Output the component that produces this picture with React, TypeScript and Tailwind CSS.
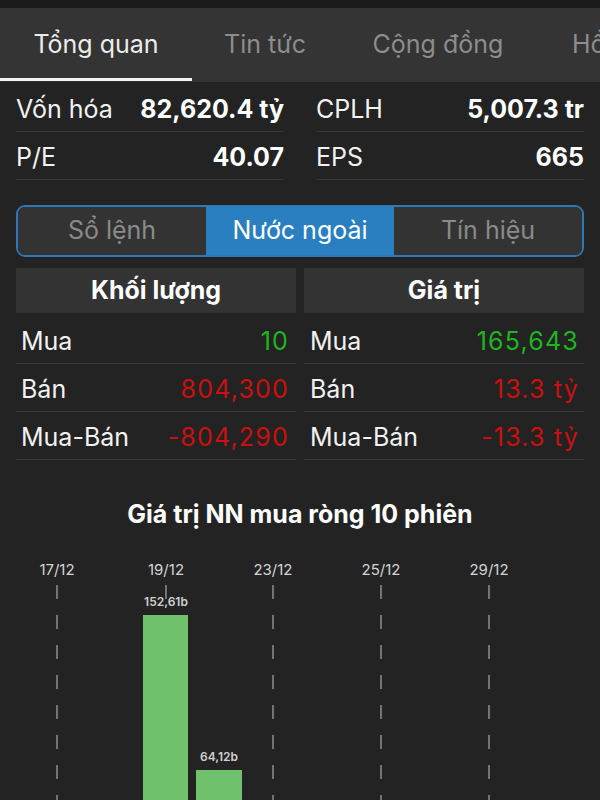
import React from 'react';

const tabs = [
  { label: 'Tổng quan', w: 'w-[192px]', active: true },
  { label: 'Tin tức', w: 'w-[146px]', active: false },
  { label: 'Cộng đồng', w: 'w-[200px]', active: false },
];

const infoRows = [
  [
    { label: 'Vốn hóa', value: '82,620.4 tỷ' },
    { label: 'CPLH', value: '5,007.3 tr' },
  ],
  [
    { label: 'P/E', value: '40.07' },
    { label: 'EPS', value: '665' },
  ],
];

const volumeRows = [
  { label: 'Mua', value: '10', up: true },
  { label: 'Bán', value: '804,300', up: false },
  { label: 'Mua-Bán', value: '-804,290', up: false },
];

const valueRows = [
  { label: 'Mua', value: '165,643', up: true },
  { label: 'Bán', value: '13.3 tỷ', up: false },
  { label: 'Mua-Bán', value: '-13.3 tỷ', up: false },
];

const dates = [
  { x: 57, label: '17/12' },
  { x: 166, label: '19/12' },
  { x: 273, label: '23/12' },
  { x: 381, label: '25/12' },
  { x: 489, label: '29/12' },
];

const TradeColumn: React.FC<{ title: string; rows: typeof volumeRows; pad: string }> = ({ title, rows, pad }) => (
  <div className="flex flex-col">
    <div className="h-[45px] bg-[#333333] flex items-center justify-center text-[25px] font-bold text-white">
      {title}
    </div>
    <div className="mt-[3px]">
      {rows.map((r) => (
        <div key={r.label} className={`h-12 pt-1 flex items-center justify-between border-b border-[#383838] ${pad}`}>
          <span className="text-[25px] text-[#f2f2f2]">{r.label}</span>
          <span className={`text-[25px] tracking-[1.2px] -mr-[1px] ${r.up ? 'text-[#1fb51f]' : 'text-[#cc1010]'}`}>{r.value}</span>
        </div>
      ))}
    </div>
  </div>
);

// 10-session net buy chart, drawn in page coordinates (top edge = y 530)
const NetBuyChart: React.FC = () => (
  <svg width="600" height="270" viewBox="0 530 600 270" className="block">
    {dates.map((d) => (
      <g key={d.label}>
        <text x={d.x} y={575} textAnchor="middle" fontSize="15" fill="#d4d4d4" fontFamily="Inter, sans-serif">
          {d.label}
        </text>
        <line x1={d.x} y1={585} x2={d.x} y2={800} stroke="#8f8f8f" strokeWidth="1.5" strokeDasharray="14 16" />
      </g>
    ))}
    <rect x={143} y={615} width={45} height={190} fill="#6fc16c" />
    <rect x={196} y={770} width={46} height={40} fill="#6fc16c" />
    <text x={166} y={606} textAnchor="middle" fontSize="12" fontWeight="600" fill="#cfcfcf" fontFamily="Inter, sans-serif">
      152,61b
    </text>
    <text x={219} y={761} textAnchor="middle" fontSize="12" fontWeight="600" fill="#cfcfcf" fontFamily="Inter, sans-serif">
      64,12b
    </text>
  </svg>
);

export default function App() {
  return (
    <div className="w-[600px] h-[800px] overflow-hidden bg-[#232323] font-['Inter',sans-serif]">
      <div className="h-2 bg-[#1b1b1b]" />

      {/* Top tabs */}
      <div className="h-[74px] bg-[#343434] flex whitespace-nowrap overflow-hidden">
        {tabs.map((t) => (
          <div key={t.label} className={`${t.w} shrink-0 flex flex-col`}>
            <div className={`flex-1 pt-1 flex items-center justify-center text-[25px] ${t.active ? 'text-[#ececec]' : 'text-[#8d8d8d]'}`}>
              {t.label}
            </div>
            <div className={`h-[3px] mb-[1px] ${t.active ? 'bg-[#f2f2f2]' : ''}`} />
          </div>
        ))}
        <div className="shrink-0 flex items-center pl-[34px] text-[25px] text-[#8d8d8d]">Hồ sơ</div>
      </div>

      {/* Summary */}
      <div className="px-4 grid grid-cols-2 gap-x-8 pt-[2px]">
        {infoRows.flat().map((c) => (
          <div key={c.label} className="h-12 pt-1 flex items-center justify-between border-b border-[#383838]">
            <span className="text-[25px] text-[#f2f2f2]">{c.label}</span>
            <span className="text-[25px] font-bold text-white">{c.value}</span>
          </div>
        ))}
      </div>

      {/* Segmented control */}
      <div className="mx-4 mt-[25px] h-[52px] rounded-[9px] border-2 border-[#2d78b6] overflow-hidden grid grid-cols-3">
        <div className="bg-[#333333] flex items-center justify-center text-[25px] text-[#8a8a8a]">Sổ lệnh</div>
        <div className="bg-[#2a7fc1] flex items-center justify-center text-[25px] text-white">Nước ngoài</div>
        <div className="bg-[#333333] flex items-center justify-center text-[25px] text-[#8a8a8a]">Tín hiệu</div>
      </div>

      {/* Foreign trading */}
      <div className="mx-4 mt-[11px] grid grid-cols-2 gap-x-2">
        <TradeColumn title="Khối lượng" rows={volumeRows} pad="pl-[5px] pr-2" />
        <TradeColumn title="Giá trị" rows={valueRows} pad="pl-[6px] pr-[6px]" />
      </div>

      <div className="mt-[40px] h-[30px] flex items-center justify-center text-[25px] font-bold text-white">
        Giá trị NN mua ròng 10 phiên
      </div>

      <NetBuyChart />
    </div>
  );
}
